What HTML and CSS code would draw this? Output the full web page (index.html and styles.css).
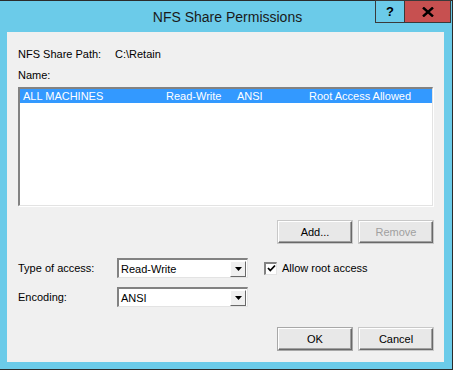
FILE: index.html
```html
<!DOCTYPE html>
<html>
<head>
<meta charset="utf-8">
<link rel="stylesheet" href="styles.css">
</head>
<body>
<div class="window">
  <div class="titlebar">
    <div class="title">NFS Share Permissions</div>
    <div class="caption-buttons">
      <div class="cap-btn help">?</div>
      <div class="cap-btn close">
        <svg width="12" height="10" viewBox="0 0 12 10"><path d="M1 0.5 L11 9.5 M11 0.5 L1 9.5" stroke="#000" stroke-width="2.4"/></svg>
      </div>
    </div>
  </div>
  <div class="content">
    <div class="path-row">
      <span class="path-label">NFS Share Path:</span>
      <span class="path-value">C:\Retain</span>
    </div>
    <div class="name-label">Name:</div>
    <div class="listbox">
      <div class="list-row selected">
        <span class="col-name">ALL MACHINES</span>
        <span class="col-access">Read-Write</span>
        <span class="col-enc">ANSI</span>
        <span class="col-root">Root Access Allowed</span>
      </div>
    </div>
    <div class="button-row">
      <div class="btn">Add...</div>
      <div class="btn disabled">Remove</div>
    </div>
    <div class="form-row first">
      <span class="form-label">Type of access:</span>
      <div class="combo">
        <span class="combo-text">Read-Write</span>
        <span class="combo-arrow"><svg width="7" height="4" viewBox="0 0 7 4"><path d="M0 0 H7 L3.5 4 Z" fill="#000"/></svg></span>
      </div>
      <div class="check">
        <span class="checkbox"><svg width="9" height="9" viewBox="0 0 9 9"><path d="M1 4 L3.3 6.5 L8 1.5" stroke="#000" stroke-width="1.8" fill="none"/></svg></span>
        <span class="check-label">Allow root access</span>
      </div>
    </div>
    <div class="form-row second">
      <span class="form-label">Encoding:</span>
      <div class="combo">
        <span class="combo-text">ANSI</span>
        <span class="combo-arrow"><svg width="7" height="4" viewBox="0 0 7 4"><path d="M0 0 H7 L3.5 4 Z" fill="#000"/></svg></span>
      </div>
    </div>
    <div class="button-row bottom">
      <div class="btn default">OK</div>
      <div class="btn">Cancel</div>
    </div>
  </div>
</div>
</body>
</html>
```

FILE: styles.css
```css
html, body {
  margin: 0;
  padding: 0;
  background: #6bcbe9;
}
body {
  width: 453px;
  height: 370px;
  overflow: hidden;
  font-family: "Liberation Sans", Arial, sans-serif;
  font-size: 11px;
  color: #000;
}
.window {
  box-sizing: border-box;
  width: 453px;
  height: 370px;
  background: #6bcbe9;
  border-top: 1px solid #2b2b2b;
  border-right: 1px solid #2b2b2b;
  border-bottom: 1px solid #2b2b2b;
  padding: 0 8px 7px 7px;
  display: flex;
  flex-direction: column;
}
.titlebar {
  position: relative;
  height: 31px;
  flex: none;
}
.title {
  text-align: center;
  font-size: 14px;
  line-height: 16px;
  padding-top: 8px;
  padding-left: 4px;
  color: #1a1a1a;
}
.caption-buttons {
  position: absolute;
  top: -1px;
  right: -7px;
  display: flex;
}
.cap-btn {
  box-sizing: border-box;
  height: 23px;
  border: 1px solid #3a3a3a;
  display: flex;
  align-items: center;
  justify-content: center;
  font-weight: bold;
  font-size: 13px;
}
.cap-btn.help {
  width: 29px;
  border-right: none;
  background: #6bcbe9;
}
.cap-btn.close {
  width: 47px;
  background: #c75050;
}
.content {
  flex: 1;
  background: #f0f0f0;
  padding: 16px 10px 0 11px;
  display: flex;
  flex-direction: column;
}
.path-row {
  line-height: 13px;
  display: flex;
}
.path-label {
  width: 97px;
}
.name-label {
  line-height: 13px;
  margin-top: 8px;
}
.listbox {
  margin-top: 5px;
  box-sizing: border-box;
  width: 415px;
  height: 119px;
  background: #fff;
  border-top: 2px solid #828282;
  border-left: 2px solid #828282;
  border-right: 1px solid #e3e3e3;
  border-bottom: 1px solid #e3e3e3;
  box-shadow: 1px 1px 0 #fff;
}
.list-row {
  height: 14px;
  line-height: 14px;
  display: flex;
  padding-left: 3px;
}
.list-row.selected {
  background: #3399ff;
  color: #fff;
}
.col-name { width: 143px; }
.col-access { width: 71px; }
.col-enc { width: 72px; }
.button-row {
  display: flex;
  justify-content: flex-end;
  gap: 7px;
  margin-top: 15px;
  padding-right: 1px;
}
.button-row.bottom {
  margin-top: 21px;
}
.btn {
  box-sizing: border-box;
  width: 74px;
  height: 22px;
  display: flex;
  align-items: center;
  justify-content: center;
  background: #e8e8e8;
  border-top: 1px solid #fff;
  border-left: 1px solid #fff;
  border-right: 1px solid #696969;
  border-bottom: 1px solid #696969;
  box-shadow: inset -1px -1px 0 #a0a0a0, 0 0 0 1px #c8c8c8;
}
.btn.default {
  box-shadow: inset -1px -1px 0 #a0a0a0, 0 0 0 1px #a8a8a8;
}
.btn.disabled {
  color: #a0a0a0;
}
.form-row {
  display: flex;
  align-items: center;
  height: 20px;
}
.form-row.first {
  margin-top: 15px;
}
.form-row.second {
  margin-top: 9px;
}
.form-label {
  width: 99px;
}
.combo {
  box-sizing: border-box;
  width: 131px;
  height: 20px;
  background: #fff;
  border-top: 2px solid #828282;
  border-left: 2px solid #828282;
  border-right: 1px solid #e3e3e3;
  border-bottom: 1px solid #e3e3e3;
  display: flex;
  align-items: center;
  padding: 1px 1px 1px 2px;
}
.combo-text {
  flex: 1;
}
.combo-arrow {
  box-sizing: border-box;
  width: 16px;
  height: 16px;
  background: #f0f0f0;
  border-top: 1px solid #fff;
  border-left: 1px solid #fff;
  border-right: 1px solid #696969;
  border-bottom: 1px solid #696969;
  display: flex;
  align-items: center;
  justify-content: center;
}
.check {
  display: flex;
  align-items: center;
  margin-left: 16px;
}
.checkbox {
  box-sizing: border-box;
  width: 13px;
  height: 13px;
  background: #fff;
  border-top: 2px solid #828282;
  border-left: 2px solid #828282;
  border-right: 1px solid #e3e3e3;
  border-bottom: 1px solid #e3e3e3;
  display: flex;
  align-items: center;
  justify-content: center;
  margin-right: 5px;
}
```
